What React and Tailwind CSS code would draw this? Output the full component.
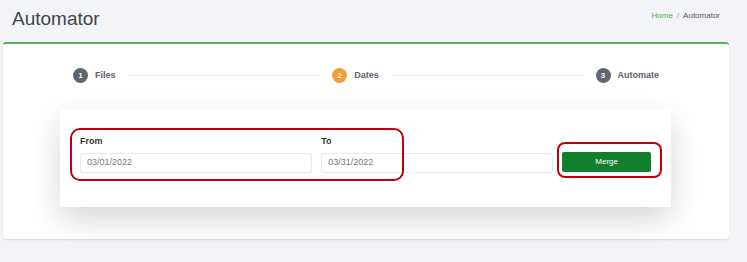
import React from "react";

const Step = ({ num, label, active }) => (
  <div className="flex items-center gap-[7px] shrink-0">
    <div
      className={`w-[15px] h-[15px] rounded-full flex items-center justify-center text-[8px] font-bold text-white ${
        active ? "bg-[#f59e33]" : "bg-[#5f6670]"
      }`}
    >
      {num}
    </div>
    <span className="text-[9px] font-bold text-[#5b6370]">{label}</span>
  </div>
);

const App = () => {
  return (
    <div
      className="w-[747px] h-[262px] bg-[#f3f4f8] overflow-hidden"
      style={{ fontFamily: '"Liberation Sans", Arial, sans-serif' }}
    >
      {/* Header */}
      <div className="flex justify-between items-start pl-[12px] pr-[27px] h-[42px]">
        <h1 className="text-[19px] text-[#3f454d] leading-none mt-[9px]">Automator</h1>
        <div className="text-[8px] mt-[10px] text-[#555]">
          <span className="text-[#4caf50]">Home</span>
          <span className="mx-[4px] text-[#999]">/</span>
          <span>Automator</span>
        </div>
      </div>

      {/* Main card */}
      <div className="ml-[3px] w-[726px] h-[197px] bg-white border-t-2 border-[#56b05c] rounded-[3px] shadow-[0_1px_2px_rgba(0,0,0,0.1)]">
        {/* Stepper */}
        <div className="flex items-center pl-[70px] pr-[70px] pt-[24px]">
          <Step num="1" label="Files" />
          <div className="flex-1 h-px bg-[#eeeff1] ml-[11px] mr-[14px]" />
          <Step num="2" label="Dates" active />
          <div className="flex-1 h-px bg-[#eeeff1] ml-[11px] mr-[14px]" />
          <Step num="3" label="Automate" />
        </div>

        {/* Dates form */}
        <div className="relative ml-[57px] mt-[26px] w-[611px] h-[98px] bg-white shadow-[0_12px_30px_rgba(0,0,0,0.16)] px-[20px] pt-[26px]">
          <div className="flex items-end gap-[9px]">
            <div className="w-[233px]">
              <label className="block text-[9px] font-bold text-[#333] mb-[4px]">From</label>
              <div className="h-[20px] border border-[#eaeaea] rounded-[3px] flex items-center px-[6px] text-[9px] text-[#777]">
                03/01/2022
              </div>
            </div>
            <div className="w-[233px]">
              <label className="block text-[9px] font-bold text-[#333] mb-[4px]">To</label>
              <div className="h-[20px] border border-[#eaeaea] rounded-[3px] flex items-center px-[6px] text-[9px] text-[#777]">
                03/31/2022
              </div>
            </div>
            <button className="w-[89px] h-[20px] mb-px bg-[#117f2b] rounded-[2px] text-white text-[8px]">
              Merge
            </button>
          </div>

          {/* Annotation boxes */}
          <div className="absolute left-[10px] top-[19px] w-[334px] h-[53px] border-2 border-[#c0000e] rounded-[10px]" />
          <div className="absolute left-[497px] top-[33px] w-[105px] h-[36px] border-2 border-[#c0000e] rounded-[8px]" />
        </div>
      </div>
    </div>
  );
};

export default App;
